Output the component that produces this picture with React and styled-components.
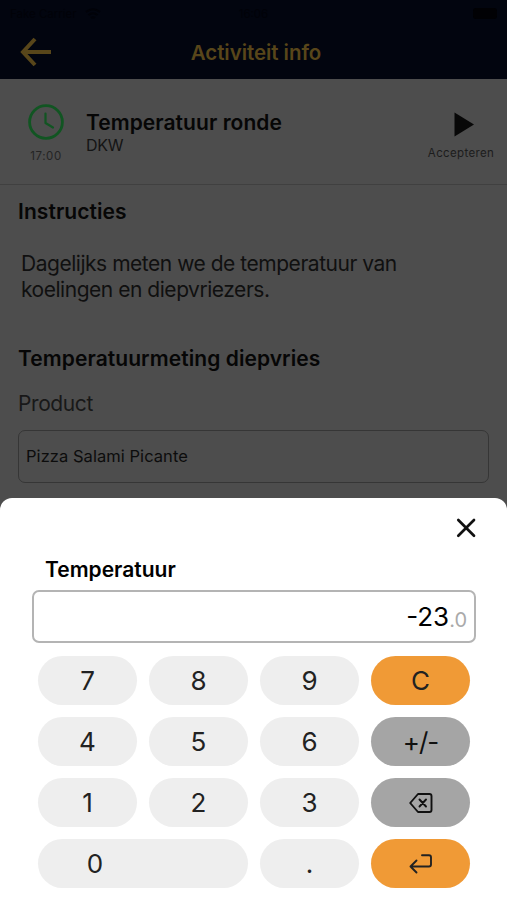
import { useState } from "react";
import styled, { createGlobalStyle } from "styled-components";

const GlobalStyle = createGlobalStyle`
    * {
        box-sizing: border-box;
    }
    body {
        margin: 0;
        font-family: Inter, "Liberation Sans", sans-serif;
    }
    button {
        font-family: inherit;
        border: none;
        padding: 0;
        background: none;
    }
    svg {
        display: block;
    }
`;

const Screen = styled.div`
    display: flex;
    flex-direction: column;
    width: 507px;
    height: 900px;
    overflow: hidden;
    background: #4d4d4d;
    color: #060606;
`;

const Header = styled.header`
    height: 79px;
    flex-shrink: 0;
    background: #02050f;
`;

const StatusBar = styled.div`
    display: grid;
    grid-template-columns: 1fr auto 1fr;
    align-items: center;
    height: 27px;
    padding: 0 10px;
    font-size: 11.5px;
    color: #010208;
`;

const Carrier = styled.div`
    display: flex;
    align-items: center;
    gap: 8px;
`;

const Battery = styled.div`
    justify-self: end;
    width: 24px;
    height: 11px;
    border-radius: 3px;
    background: #010104;
`;

const NavBar = styled.div`
    display: grid;
    grid-template-columns: 60px 1fr 60px;
    align-items: center;
    height: 50px;
    padding-left: 20px;
    padding-right: 15px;
`;

const BackButton = styled.button`
    color: #58461a;
`;

const NavTitle = styled.h1`
    margin: 0;
    text-align: center;
    font-size: 20.5px;
    font-weight: 600;
    letter-spacing: -0.05px;
    color: #58461a;
`;

const Activity = styled.section`
    display: flex;
    height: 106px;
    flex-shrink: 0;
    border-bottom: 1px solid #404040;
`;

const ActivityTime = styled.div`
    display: flex;
    flex-direction: column;
    align-items: center;
    width: 86px;
    padding: 25px 0 0 6px;
    font-size: 11.5px;
    line-height: 14px;
    letter-spacing: 0.6px;
    gap: 9px;
    color: #242424;
`;

const ActivityText = styled.div`
    flex: 1;
    padding-top: 31px;
`;

const ActivityName = styled.div`
    font-size: 21px;
    line-height: 25px;
    font-weight: 600;
    letter-spacing: 0.05px;
`;

const Department = styled.div`
    font-size: 16px;
    line-height: 20px;
    letter-spacing: -0.3px;
    color: #141414;
`;

const Accept = styled.button`
    display: flex;
    flex-direction: column;
    align-items: center;
    width: 92px;
    padding-top: 33px;
    gap: 9px;
    font-size: 11.5px;
    line-height: 14px;
    letter-spacing: 0.35px;
    color: #1c1c1c;

    svg {
        margin-left: 5px;
    }
`;

const Form = styled.main`
    display: flex;
    flex-direction: column;
    height: 313px;
    flex-shrink: 0;
    padding: 14px 18px 0;
`;

const Heading = styled.h2`
    margin: 0;
    font-size: 21px;
    line-height: 26px;
    font-weight: 600;
    letter-spacing: 0.07px;
`;

const Instructions = styled.p`
    margin: 26px 0 43px 3px;
    font-size: 21px;
    line-height: 26px;
    letter-spacing: -0.47px;
    color: #101010;
`;

const FieldLabel = styled.label`
    margin-top: 19px;
    font-size: 21px;
    line-height: 26px;
    letter-spacing: -0.4px;
    color: #181818;
`;

const ProductField = styled.div`
    display: flex;
    align-items: center;
    height: 53px;
    margin-top: 13px;
    padding: 0 0 2px 7px;
    border: 1.5px solid #363636;
    border-radius: 7px;
    font-size: 16.5px;
    letter-spacing: 0.05px;
    color: #0c0c0c;
`;

const Sheet = styled.section`
    display: flex;
    flex-direction: column;
    flex: 1;
    padding: 14px 31px 0 32px;
    background: #fff;
    border-radius: 12px 12px 0 0;
    color: #000;
`;

const CloseButton = styled.button`
    align-self: flex-end;
    margin-right: -6px;
    color: #111;
`;

const SheetTitle = styled.h3`
    margin: 13px 0 7px 13px;
    font-size: 21px;
    line-height: 26px;
    font-weight: 600;
`;

const Display = styled.div`
    display: flex;
    justify-content: flex-end;
    align-items: baseline;
    height: 53px;
    padding: 0 7px;
    border: 2px solid #b4b4b4;
    border-radius: 7px;
    font-size: 26px;
    line-height: 49px;
`;

const Decimals = styled.span`
    position: relative;
    top: 1px;
    font-size: 20px;
    color: #aaa;
`;

const Keypad = styled.div`
    display: grid;
    grid-template-columns: repeat(4, 99px);
    grid-auto-rows: 49px;
    gap: 12px;
    margin: 13px 0 0 6px;
`;

const keyColors = {
    digit: "#eeeeee",
    action: "#f09a36",
    tool: "#a5a5a5",
};

const Key = styled.button`
    display: flex;
    align-items: center;
    justify-content: center;
    grid-column: span ${(props) => (props.$wide ? 2 : 1)};
    padding-right: ${(props) => (props.$wide ? "96px" : "0")};
    border-radius: 25px;
    background: ${(props) => keyColors[props.$kind]};
    font-size: 26px;
    letter-spacing: ${(props) => (props.$kind === "tool" ? "-1px" : "0")};
    color: ${(props) => (props.$kind === "tool" ? "#111" : "#222")};
`;

const ArrowIcon = () => (
    <svg width="32" height="30" viewBox="0 0 32 30" fill="none" stroke="currentColor" strokeWidth="4">
        <path d="M15 2 L3 15 L15 28 M3 15 H31" />
    </svg>
);

const WifiIcon = () => (
    <svg width="16" height="12" viewBox="0 0 16 12" fill="none" stroke="currentColor" strokeWidth="2">
        <path d="M1 4 Q8 -1.5 15 4 M3.5 7 Q8 3.5 12.5 7 M6 10 Q8 8.5 10 10" />
    </svg>
);

const ClockIcon = () => (
    <svg width="36" height="36" viewBox="0 0 36 36" fill="none" stroke="#115522" strokeLinecap="round">
        <circle cx="18" cy="18" r="16.4" strokeWidth="2.8" />
        <path d="M17.5 9.5 V19 L25 23.5" strokeWidth="2.2" strokeLinejoin="round" />
    </svg>
);

const PlayIcon = () => (
    <svg width="20" height="25" viewBox="0 0 20 25" fill="#080808">
        <path d="M0.5 0.5 L20 12.5 L0.5 24.5 Z" />
    </svg>
);

const CloseIcon = () => (
    <svg width="32" height="32" viewBox="0 0 32 32" fill="none" stroke="currentColor" strokeWidth="2.7">
        <path d="M8.3 8 L24 23.7 M24 8 L8.3 23.7" strokeLinecap="round" />
    </svg>
);

const BackspaceIcon = () => (
    <svg width="24" height="20" viewBox="0 0 24 20" fill="none" stroke="#111" strokeWidth="1.9" strokeLinejoin="round" strokeLinecap="round">
        <path d="M9 1 H20.5 Q22.5 1 22.5 3 V17 Q22.5 19 20.5 19 H9 L1.2 10 Z" />
        <path d="M10.5 6.5 L17 13.5 M17 6.5 L10.5 13.5" />
    </svg>
);

const EnterIcon = () => (
    <svg width="24" height="20" viewBox="0 0 24 20" fill="none" stroke="#222" strokeWidth="1.9" strokeLinejoin="round" strokeLinecap="round">
        <path d="M13 1.2 H20 Q22 1.2 22 3.2 V10.5 Q22 12.5 20 12.5 H1.5 M7.5 6.5 L1.5 12.5 L7.5 18.5" />
    </svg>
);

const keys = [
    { id: "7" },
    { id: "8" },
    { id: "9" },
    { id: "C", kind: "action" },
    { id: "4" },
    { id: "5" },
    { id: "6" },
    { id: "+/-", kind: "tool" },
    { id: "1" },
    { id: "2" },
    { id: "3" },
    { id: "back", kind: "tool", icon: <BackspaceIcon /> },
    { id: "0", wide: true },
    { id: "." },
    { id: "enter", kind: "action", icon: <EnterIcon /> },
];

function App() {
    const [value, setValue] = useState("-23");

    const handleKey = (id) => {
        if (id === "enter") return;
        if (id === "C") {
            setValue("0");
        } else if (id === "back") {
            setValue(value.length > 1 ? value.slice(0, -1) : "0");
        } else if (id === "+/-") {
            setValue(value.startsWith("-") ? value.slice(1) : "-" + value);
        } else if (id !== "." || !value.includes(".")) {
            setValue(value === "0" && id !== "." ? id : value + id);
        }
    };

    return (
        <>
            <GlobalStyle />
            <Screen>
                <Header>
                    <StatusBar>
                        <Carrier>
                            Fake Carrier
                            <WifiIcon />
                        </Carrier>
                        <span>16:06</span>
                        <Battery />
                    </StatusBar>
                    <NavBar>
                        <BackButton aria-label="Terug">
                            <ArrowIcon />
                        </BackButton>
                        <NavTitle>Activiteit info</NavTitle>
                    </NavBar>
                </Header>

                <Activity>
                    <ActivityTime>
                        <ClockIcon />
                        17:00
                    </ActivityTime>
                    <ActivityText>
                        <ActivityName>Temperatuur ronde</ActivityName>
                        <Department>DKW</Department>
                    </ActivityText>
                    <Accept>
                        <PlayIcon />
                        Accepteren
                    </Accept>
                </Activity>

                <Form>
                    <Heading>Instructies</Heading>
                    <Instructions>
                        Dagelijks meten we de temperatuur van
                        <br />
                        koelingen en diepvriezers.
                    </Instructions>
                    <Heading>Temperatuurmeting diepvries</Heading>
                    <FieldLabel>Product</FieldLabel>
                    <ProductField>Pizza Salami Picante</ProductField>
                </Form>

                <Sheet>
                    <CloseButton aria-label="Sluiten">
                        <CloseIcon />
                    </CloseButton>
                    <SheetTitle>Temperatuur</SheetTitle>
                    <Display>
                        {value}
                        {!value.includes(".") && <Decimals>.0</Decimals>}
                    </Display>
                    <Keypad>
                        {keys.map(({ id, kind = "digit", wide, icon }) => (
                            <Key key={id} $kind={kind} $wide={wide} onClick={() => handleKey(id)}>
                                {icon || id}
                            </Key>
                        ))}
                    </Keypad>
                </Sheet>
            </Screen>
        </>
    );
}

export default App;
